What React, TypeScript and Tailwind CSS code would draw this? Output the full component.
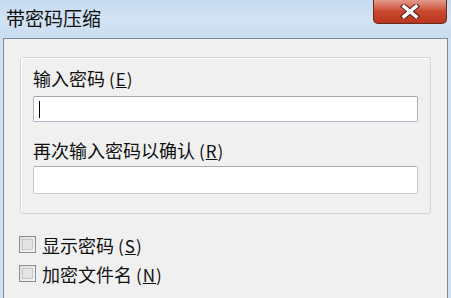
import React from 'react';

const font = { fontFamily: '"Noto Sans CJK SC", "Liberation Sans", sans-serif' };

const Key = ({ k }: { k: string }) => (
  <span className="ml-[4px] text-[17px] tracking-[1px]">(<span className="underline">{k}</span>)</span>
);

const Check = ({ label, keyChar }: { label: string; keyChar: string }) => (
  <label className="flex items-center h-[29px] gap-[6px]">
    <span className="w-[17px] h-[17px] border border-[#8f8f8f] bg-gradient-to-br from-[#dcdcdc] to-[#f6f6f6] p-[2px]">
      <span className="block w-full h-full border border-[#c8c8c8] bg-[#e4e4e4]"></span>
    </span>
    <span className="text-[18px] text-[#111] leading-none">
      {label}
      <Key k={keyChar} />
    </span>
  </label>
);

export default function App() {
  return (
    <div style={font} className="w-[451px] h-[298px] bg-[#cfe0f2] flex flex-col overflow-hidden">
      {/* title bar */}
      <div className="h-[38px] flex items-start justify-between bg-gradient-to-b from-[#c6daf0] via-[#d2e3f5] to-[#c9dcf0]">
        <span className="text-[19px] text-[#111] pl-[6px] pt-[8px] leading-none">带密码压缩</span>
        <div className="mr-[4px] w-[74px] h-[24px] rounded-b-[5px] border border-t-0 border-[#6b2a22] bg-gradient-to-b from-[#e39a8c] via-[#c9482f] to-[#b8361f] flex items-center justify-center">
          <svg width="20" height="15" viewBox="0 0 20 15">
            <path d="M4 2.5 L16 12.5 M16 2.5 L4 12.5" stroke="#5a1a12" strokeWidth="5.5" strokeLinecap="square" />
            <path d="M4 2.5 L16 12.5 M16 2.5 L4 12.5" stroke="#ffffff" strokeWidth="3.5" strokeLinecap="square" />
          </svg>
        </div>
      </div>
      {/* client area */}
      <div className="flex-1 mx-[3px] border-t border-l border-r border-[#7f8a96] bg-[#f0f0f0] px-[16px] pt-[18px]">
        <div className="border border-[#d5d5d5] shadow-[inset_1px_1px_0_#ffffff] rounded-[3px] h-[157px] px-[12px] pt-[8px]">
          <div className="text-[18px] text-[#111] leading-none h-[24px] flex items-center">
            输入密码<Key k="E" />
          </div>
          <div className="mt-[6px] h-[26px] border border-[#abb5c2] border-t-[#9ea6b0] bg-white rounded-[2px] flex items-center pl-[5px]">
            <span className="w-[1px] h-[17px] bg-black"></span>
          </div>
          <div className="mt-[18px] text-[18px] text-[#111] leading-none h-[20px] flex items-center">
            再次输入密码以确认<Key k="R" />
          </div>
          <div className="mt-[6px] h-[28px] border border-[#c3c8cf] border-t-[#a8aeb6] bg-white rounded-[2px]"></div>
        </div>
        <div className="mt-[16px] -ml-[1px] flex flex-col">
          <Check label="显示密码" keyChar="S" />
          <Check label="加密文件名" keyChar="N" />
        </div>
      </div>
    </div>
  );
}
